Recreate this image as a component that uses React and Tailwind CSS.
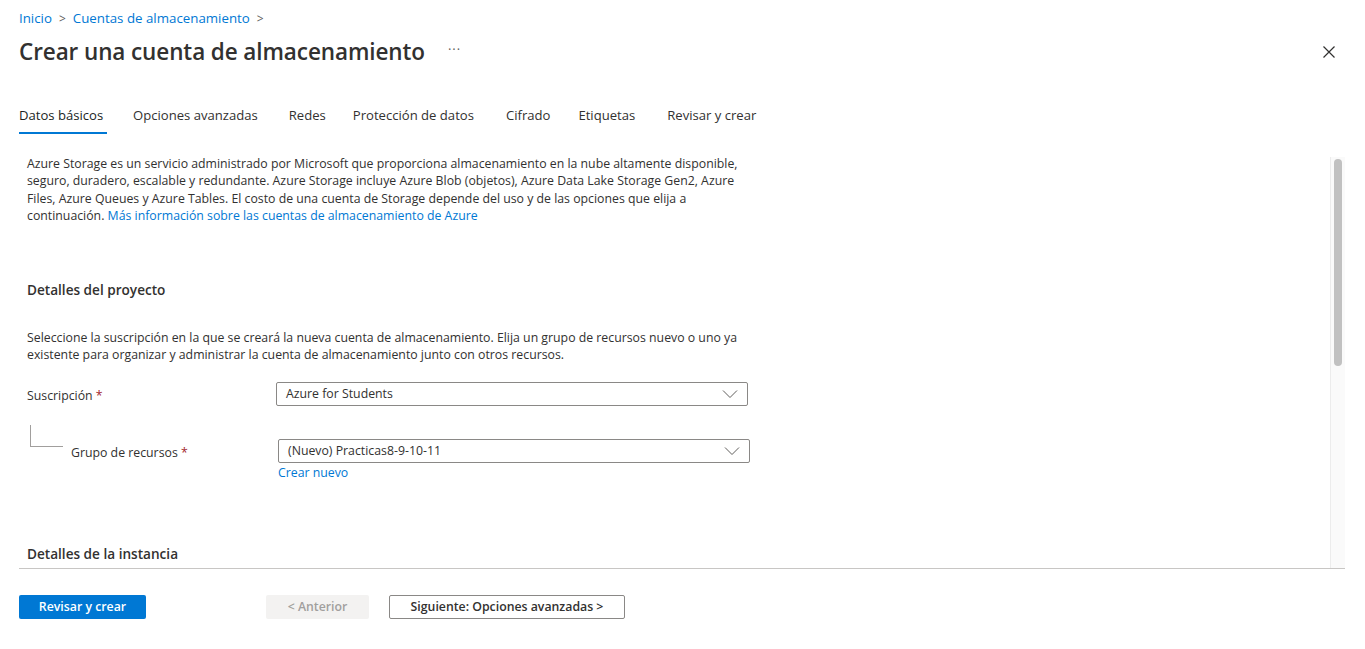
import React from "react";

const font = { fontFamily: '"Open Sans", "Noto Sans", sans-serif' };

function Chevron({ className = "" }) {
  return (
    <svg className={className} width="16" height="10" viewBox="0 0 16 10" fill="none">
      <path d="M1 1.5 L8 8.5 L15 1.5" stroke="#605e5c" strokeWidth="1" />
    </svg>
  );
}

function Select({ value }) {
  return (
    <div className="flex h-[24px] w-[472px] items-center justify-between rounded-[2px] border border-[#8a8886] pl-[9px] pr-[9px] text-[12.3px] text-[#323130]">
      <span>{value}</span>
      <Chevron />
    </div>
  );
}

export default function App() {
  return (
    <div style={font} className="h-[649px] w-[1365px] overflow-hidden bg-white text-[#323130]">
      <div className="pl-[19px] pr-[20px]">
        {/* breadcrumb */}
        <div className="flex h-[21px] items-center gap-[7px] pt-[17px] text-[13.3px] text-[#0078d4]">
          <span>Inicio</span>
          <span className="text-[12px] text-[#605e5c]">&gt;</span>
          <span>Cuentas de almacenamiento</span>
          <span className="text-[12px] text-[#605e5c]">&gt;</span>
        </div>
        {/* title */}
        <div className="mt-[13px] flex h-[36px] items-center">
          <h1 className="text-[22.5px] font-semibold tracking-[-0.1px] text-[#323130]">Crear una cuenta de almacenamiento</h1>
          <span className="ml-[23px] mt-[-4px] text-[13px] tracking-[1px] text-[#605e5c]">···</span>
          <div className="flex-1" />
          <svg width="14" height="14" viewBox="0 0 14 14" className="mr-[9px]">
            <path d="M1.5 1.5 L12.5 12.5 M12.5 1.5 L1.5 12.5" stroke="#323130" strokeWidth="1.2" />
          </svg>
        </div>
        {/* tabs */}
        <div className="mt-[36px] flex h-[28px] items-start text-[13.1px] text-[#323130]">
          <div className="mr-[26px] flex w-[88px] flex-col">
            <span className="leading-[18px] text-[#201f1e]">Datos básicos</span>
            <span className="mt-[8px] h-[2px] w-full bg-[#0078d4]" />
          </div>
          <span className="mr-[31px] leading-[18px]">Opciones avanzadas</span>
          <span className="mr-[27px] leading-[18px]">Redes</span>
          <span className="mr-[32px] leading-[18px]">Protección de datos</span>
          <span className="mr-[28px] leading-[18px]">Cifrado</span>
          <span className="mr-[32px] leading-[18px]">Etiquetas</span>
          <span className="leading-[18px]">Revisar y crear</span>
        </div>
        {/* scroll area */}
        <div className="mt-[10px] flex h-[425px] w-[1326px] border-b border-[#c8c6c4]">
          <div className="flex-1 overflow-hidden pl-[8px] pt-[11px] text-[12.3px] leading-[17.3px]">
            <p className="w-[740px]">
              Azure Storage es un servicio administrado por Microsoft que proporciona almacenamiento en la nube altamente disponible,<br />
              seguro, duradero, escalable y redundante. Azure Storage incluye Azure Blob (objetos), Azure Data Lake Storage Gen2, Azure<br />
              Files, Azure Queues y Azure Tables. El costo de una cuenta de Storage depende del uso y de las opciones que elija a<br />
              continuación. <span className="text-[#0078d4]">Más información sobre las cuentas de almacenamiento de Azure</span>
            </p>
            <h2 className="mt-[57px] text-[13.6px] font-semibold leading-[18px]">Detalles del proyecto</h2>
            <p className="mt-[30px] w-[740px]">
              Seleccione la suscripción en la que se creará la nueva cuenta de almacenamiento. Elija un grupo de recursos nuevo o uno ya<br />
              existente para organizar y administrar la cuenta de almacenamiento junto con otros recursos.
            </p>
            <div className="mt-[18px] flex items-center">
              <div className="w-[249px] pt-[4px] text-[12.3px]">
                Suscripción <span className="text-[#a4262c]">*</span>
              </div>
              <Select value="Azure for Students" />
            </div>
            <div className="mt-[19px] flex">
              <div className="ml-[3px] h-[22px] w-[33px] border-b border-l border-[#a19f9d]" />
              <div className="w-[215px] pl-[8px] pt-[19px] text-[12.3px]">
                Grupo de recursos <span className="text-[#a4262c]">*</span>
              </div>
              <div className="mt-[14px] flex flex-col">
                <Select value="(Nuevo) Practicas8-9-10-11" />
                <span className="mt-[1px] text-[12.3px] text-[#0078d4]">Crear nuevo</span>
              </div>
            </div>
            <h2 className="mt-[64px] text-[13.6px] font-semibold leading-[18px]">Detalles de la instancia</h2>
          </div>
          {/* scrollbar */}
          <div className="mt-[13px] flex w-[15px] justify-center border-l border-[#ececec] bg-[#fafafa] pt-[2px]">
            <div className="h-[207px] w-[8px] rounded-full bg-[#c1c1c1]" />
          </div>
        </div>
        {/* footer */}
        <div className="mt-[26px] flex items-center text-[12.3px]">
          <button className="h-[24px] w-[127px] rounded-[2px] bg-[#0078d4] font-semibold text-white">Revisar y crear</button>
          <button className="ml-[120px] h-[24px] w-[103px] rounded-[2px] bg-[#f3f2f1] font-semibold text-[#a19f9d]">&lt; Anterior</button>
          <button className="ml-[20px] h-[24px] w-[236px] rounded-[2px] border border-[#8a8886] font-semibold text-[#323130]">Siguiente: Opciones avanzadas &gt;</button>
        </div>
      </div>
    </div>
  );
}
